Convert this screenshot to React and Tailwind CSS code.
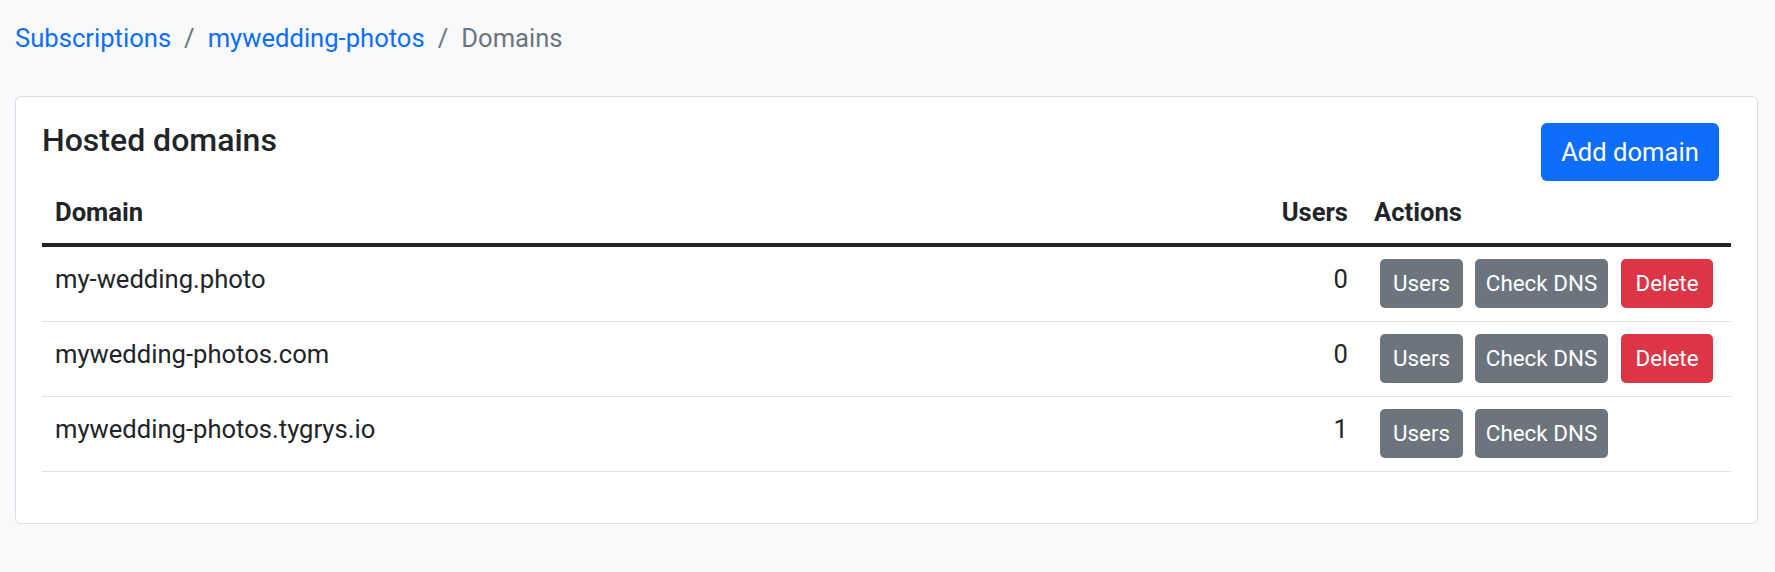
const domains = [
  { name: "my-wedding.photo", users: 0, canDelete: true },
  { name: "mywedding-photos.com", users: 0, canDelete: true },
  { name: "mywedding-photos.tygrys.io", users: 1, canDelete: false },
];

const Breadcrumb = () => (
  <nav className="flex items-center leading-[38.4px] text-[25.6px]">
    <a href="#" className="text-[#0d6efd]">Subscriptions</a>
    <span className="px-[13px] text-[#6c757d]">/</span>
    <a href="#" className="text-[#0d6efd]">mywedding-photos</a>
    <span className="px-[13px] text-[#6c757d]">/</span>
    <span className="text-[#6c757d]">Domains</span>
  </nav>
);

const SmallButton = ({ children, className }) => (
  <button
    className={`h-[49px] rounded-[5px] text-[22.4px] leading-[33.6px] text-white flex items-center justify-center ${className}`}
  >
    {children}
  </button>
);

const DomainRow = ({ domain }) => (
  <div className="grid grid-cols-[1fr_89px_370px] h-[75px] border-b border-[#dee2e6] text-[25.6px] leading-[38.4px]">
    <div className="pl-[13px] pt-[13px]">{domain.name}</div>
    <div className="pr-[13px] pt-[13px] text-right">{domain.users}</div>
    <div className="pl-[19px] pt-[12px] flex items-start gap-[12px]">
      <SmallButton className="w-[83px] bg-[#6c757d]">Users</SmallButton>
      <SmallButton className="w-[133px] bg-[#6c757d]">Check DNS</SmallButton>
      {domain.canDelete && (
        <SmallButton className="w-[92px] ml-[1px] bg-[#dc3545]">Delete</SmallButton>
      )}
    </div>
  </div>
);

export default function App() {
  return (
    <div
      className="min-h-[572px] bg-[#f8f9fa] pt-[19px] pl-[15px] pr-[17px] text-[#212529]"
      style={{ fontFamily: "Roboto, 'Open Sans', sans-serif" }}
    >
      <Breadcrumb />

      <div className="mt-[39px] bg-white border border-[#dcdde0] rounded-[6px] p-[26px] pb-[26px]">
        <div className="flex items-start justify-between h-[57px]">
          <h5 className="-mt-[2px] text-[32px] leading-[38.4px] font-medium">Hosted domains</h5>
          <button className="mr-[12px] w-[178px] h-[58px] rounded-[6px] bg-[#0d6efd] text-white text-[25.6px] leading-[38.4px]">
            Add domain
          </button>
        </div>

        <div className="mb-[25px]">
          <div className="grid grid-cols-[1fr_89px_370px] h-[67px] border-b-[4px] border-[#212529] text-[25.6px] leading-[38.4px] font-bold">
            <div className="pl-[13px] pt-[13px]">Domain</div>
            <div className="pr-[13px] pt-[13px] text-right">Users</div>
            <div className="pl-[13px] pt-[13px]">Actions</div>
          </div>
          {domains.map((d) => (
            <DomainRow key={d.name} domain={d} />
          ))}
        </div>
      </div>
    </div>
  );
}
